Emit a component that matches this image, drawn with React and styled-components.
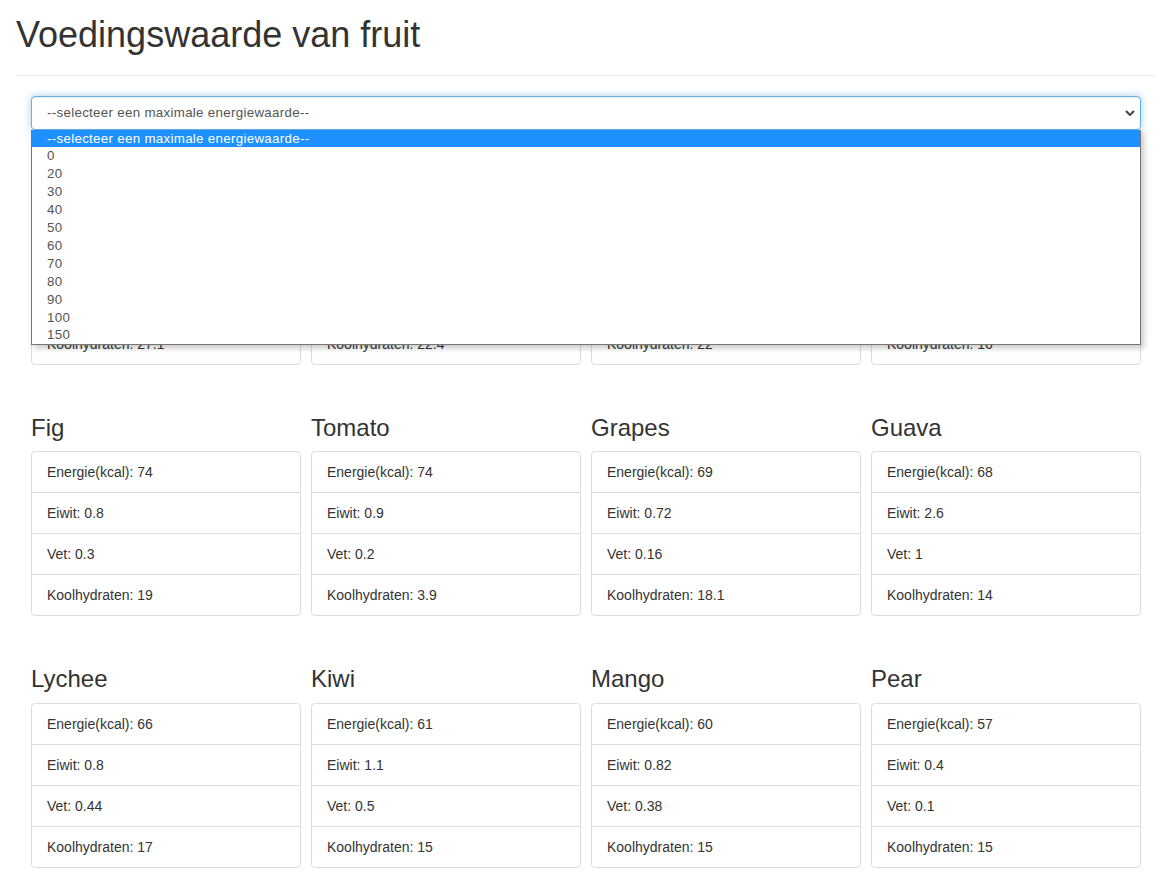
import React from "react";
import styled, { createGlobalStyle } from "styled-components";

const GlobalStyle = createGlobalStyle`
  * { box-sizing: border-box; }
  html, body { margin: 0; padding: 0; background: #fff; }
  body {
    font-family: "Liberation Sans", Arial, Helvetica, sans-serif;
    font-size: 14px;
    line-height: 1.42857143;
    color: #333;
  }
`;

const Page = styled.div`
  width: 1140px;
  margin-left: 16px;
`;

const Title = styled.h1`
  font-size: 36px;
  font-weight: 500;
  line-height: 1.1;
  margin: 15px 0 0;
`;

const Divider = styled.hr`
  margin: 20px 0;
  border: 0;
  border-top: 1px solid #eee;
  height: 0;
`;

const Content = styled.div`
  padding: 0 15px;
`;

const SelectWrap = styled.div`
  position: relative;
  height: 34px;
`;

const SelectBox = styled.div`
  height: 34px;
  display: flex;
  align-items: center;
  justify-content: space-between;
  padding: 0 5px 0 15px;
  border: 1px solid #66afe9;
  border-radius: 4px;
  background: #fff;
  color: #555;
  font-size: 13.33px;
  letter-spacing: 0.3px;
  box-shadow: inset 0 1px 1px rgba(0, 0, 0, 0.075), 0 0 8px rgba(102, 175, 233, 0.6);
`;

const Chevron = styled.svg`
  width: 10px;
  height: 6px;
  display: block;
`;

const Dropdown = styled.ul`
  position: absolute;
  top: 100%;
  left: 0;
  right: 0;
  z-index: 10;
  margin: 0;
  padding: 0;
  list-style: none;
  background: #fff;
  border: 1px solid #767676;
  border-top: none;
  box-shadow: 3px 3px 6px rgba(0, 0, 0, 0.22);
`;

const Option = styled.li`
  height: 17.9px;
  line-height: 17.9px;
  padding-left: 15px;
  font-size: 13.33px;
  letter-spacing: 0.3px;
  color: ${(p) => (p.$active ? "#fff" : "#555")};
  background: ${(p) => (p.$active ? "#1e90ff" : "transparent")};
  white-space: nowrap;
`;

const Grid = styled.div`
  margin-top: 34px;
  display: grid;
  grid-template-columns: repeat(4, 270px);
  column-gap: 10px;
  row-gap: 50px;
`;

const FruitCard = styled.section``;

const FruitName = styled.h3`
  font-size: 24px;
  font-weight: 500;
  line-height: 1.1;
  margin: 0 0 10px;
`;

const ListGroup = styled.ul`
  margin: 0;
  padding: 0;
  list-style: none;
`;

const ListItem = styled.li`
  padding: 10px 15px;
  border: 1px solid #ddd;
  margin-bottom: -1px;
  background: #fff;
  &:first-child {
    border-top-left-radius: 4px;
    border-top-right-radius: 4px;
  }
  &:last-child {
    margin-bottom: 0;
    border-bottom-left-radius: 4px;
    border-bottom-right-radius: 4px;
  }
`;

const options = [
  "--selecteer een maximale energiewaarde--",
  "0",
  "20",
  "30",
  "40",
  "50",
  "60",
  "70",
  "80",
  "90",
  "100",
  "150",
];

const fruits = [
  { name: "Banana", e: 96, p: 1.1, f: 0.2, c: 27.1 },
  { name: "Pomegranate", e: 83, p: 1.7, f: 1.2, c: 22.4 },
  { name: "Persimmon", e: 81, p: 0.6, f: 0.2, c: 22 },
  { name: "Blueberry", e: 77, p: 0.7, f: 0.3, c: 16 },
  { name: "Fig", e: 74, p: 0.8, f: 0.3, c: 19 },
  { name: "Tomato", e: 74, p: 0.9, f: 0.2, c: 3.9 },
  { name: "Grapes", e: 69, p: 0.72, f: 0.16, c: 18.1 },
  { name: "Guava", e: 68, p: 2.6, f: 1, c: 14 },
  { name: "Lychee", e: 66, p: 0.8, f: 0.44, c: 17 },
  { name: "Kiwi", e: 61, p: 1.1, f: 0.5, c: 15 },
  { name: "Mango", e: 60, p: 0.82, f: 0.38, c: 15 },
  { name: "Pear", e: 57, p: 0.4, f: 0.1, c: 15 },
];

export default function App() {
  return (
    <>
      <GlobalStyle />
      <Page>
        <Title>Voedingswaarde van fruit</Title>
        <Divider />
        <Content>
          <SelectWrap>
            <SelectBox>
              <span>--selecteer een maximale energiewaarde--</span>
              <Chevron viewBox="0 0 10 6">
                <path d="M1 1 L5 5 L9 1" fill="none" stroke="#444" strokeWidth="2" />
              </Chevron>
            </SelectBox>
            <Dropdown>
              {options.map((o, i) => (
                <Option key={o} $active={i === 0}>
                  {o}
                </Option>
              ))}
            </Dropdown>
          </SelectWrap>
          <Grid>
            {fruits.map((f) => (
              <FruitCard key={f.name}>
                <FruitName>{f.name}</FruitName>
                <ListGroup>
                  <ListItem>Energie(kcal): {f.e}</ListItem>
                  <ListItem>Eiwit: {f.p}</ListItem>
                  <ListItem>Vet: {f.f}</ListItem>
                  <ListItem>Koolhydraten: {f.c}</ListItem>
                </ListGroup>
              </FruitCard>
            ))}
          </Grid>
        </Content>
      </Page>
    </>
  );
}
